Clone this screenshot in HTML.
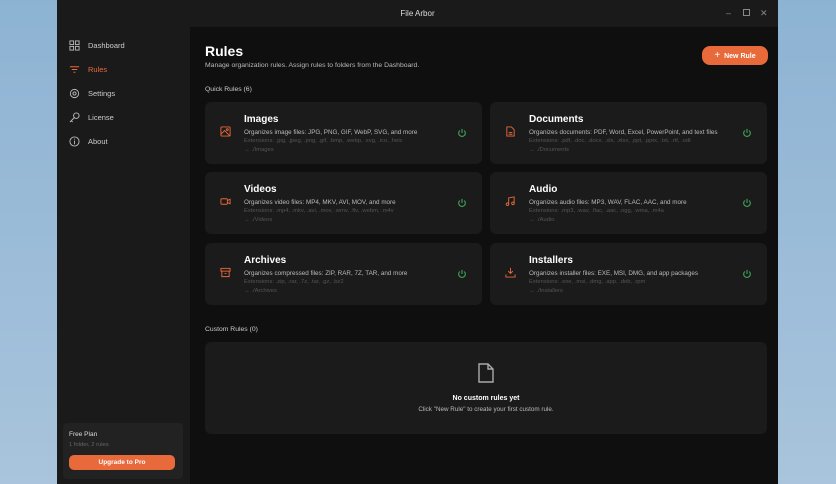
<!DOCTYPE html>
<html><head><style>
*{margin:0;padding:0;box-sizing:border-box}
body{width:836px;height:484px;background:linear-gradient(180deg,#8db3d3,#a9c4dc);font-family:"Liberation Sans",sans-serif;position:relative;overflow:hidden;color:#fff}
.win{position:absolute;left:57px;top:0;width:721px;height:484px;background:#0f0f0f}
.tb{position:absolute;left:0;top:0;width:721px;height:27px;background:#1a1a1a;font-size:8px;color:#ddd;text-align:center;line-height:27px}
.ctl{position:absolute;top:0;font-size:9px;color:#888}
.side{position:absolute;left:0;top:27px;width:133px;height:457px;background:#1a1a1a}
.nav{position:absolute;left:12px;font-size:7.5px;color:#ccc;display:flex;align-items:center}
.nav svg{margin-right:8px}
.plan{position:absolute;left:6px;top:423px;width:120px;height:56px;background:#222;border-radius:4px}
.btn{background:#e8693a;border-radius:5px;color:#fff;font-weight:bold;text-align:center}
.card{position:absolute;width:277px;height:62px;background:#1b1b1b;border-radius:6px}
.card .ic{position:absolute;left:15px;top:24px}
.card h3{position:absolute;left:39px;top:12px;font-size:10px;font-weight:bold}
.card .d{position:absolute;left:39px;top:27px;font-size:6.3px;color:#bbb;white-space:nowrap}
.card .e{position:absolute;left:39px;top:36px;font-size:5.8px;color:#555;white-space:nowrap}
.card .p{position:absolute;left:39px;top:45px;font-size:5.8px;color:#555}
.card .pw{position:absolute;right:15px;top:26px}
</style></head><body>
<div class="win">
<div class="tb">File Arbor
<span class="ctl" style="left:669px">–</span>
<span class="ctl" style="left:686px;top:9px;width:7px;height:7px;border:1px solid #888"></span>
<span class="ctl" style="left:703px">✕</span></div>
<div class="side">
<div class="nav" style="top:13px"><svg width="11" height="11" viewBox="0 0 12 12" fill="none" stroke="#bbb"><rect x="1" y="1" width="4" height="4"/><rect x="7" y="1" width="4" height="4"/><rect x="1" y="7" width="4" height="4"/><rect x="7" y="7" width="4" height="4"/></svg>Dashboard</div>
<div class="nav" style="top:37px;color:#e8693a"><svg width="11" height="11" viewBox="0 0 12 12" stroke="#e8693a"><path d="M1 3h10M3 6h6M5 9h2"/></svg>Rules</div>
<div class="nav" style="top:61px"><svg width="11" height="11" viewBox="0 0 12 12" fill="none" stroke="#bbb"><circle cx="6" cy="6" r="4.5"/><circle cx="6" cy="6" r="1.7"/></svg>Settings</div>
<div class="nav" style="top:85px"><svg width="11" height="11" viewBox="0 0 12 12" fill="none" stroke="#bbb"><circle cx="8" cy="4" r="3"/><path d="M6 6L1 11M2.5 9.5l1.5 1.5"/></svg>License</div>
<div class="nav" style="top:109px"><svg width="11" height="11" viewBox="0 0 12 12" fill="none" stroke="#bbb"><circle cx="6" cy="6" r="5"/><path d="M6 5v4M6 3v1"/></svg>About</div>
<div class="plan" style="top:396px">
<div style="position:absolute;left:6px;top:8px;font-size:6.5px;color:#ddd">Free Plan</div>
<div style="position:absolute;left:6px;top:19px;font-size:5.8px;color:#666">1 folder, 2 rules</div>
<div class="btn" style="position:absolute;left:6px;top:32px;width:106px;height:15px;font-size:6.5px;line-height:15px">Upgrade to Pro</div>
</div>
</div>
<div style="position:absolute;left:148px;top:43px;font-size:14px;font-weight:bold">Rules</div>
<div style="position:absolute;left:148px;top:62px;font-size:6.8px;color:#bbb">Manage organization rules. Assign rules to folders from the Dashboard.</div>
<div class="btn" style="position:absolute;left:645px;top:46px;width:66px;height:19px;font-size:7px;line-height:19px;border-radius:8px"><span style="font-size:10px;font-weight:normal">+</span>&nbsp; New Rule</div>
<div style="position:absolute;left:148px;top:86px;font-size:6.8px;color:#ccc">Quick Rules (6)</div>

<div class="card" style="left:148px;top:102px"><svg class="ic" width="11" height="11" viewBox="0 0 12 12" fill="none" stroke="#e8693a"><rect x="1" y="1" width="10" height="10" rx="1"/><path d="M1 9l4-4 6 6"/><circle cx="8" cy="4" r="1"/></svg><h3>Images</h3><div class="d">Organizes image files: JPG, PNG, GIF, WebP, SVG, and more</div><div class="e">Extensions: .jpg, .jpeg, .png, .gif, .bmp, .webp, .svg, .ico, .heic</div><div class="p">→ ./Images</div><svg class="pw" width="10" height="10" viewBox="0 0 12 12" fill="none" stroke="#3fa45a" stroke-width="1.3"><path d="M6 1v5M3.5 3a4 4 0 1 0 5 0"/></svg></div>
<div class="card" style="left:433px;top:102px"><svg class="ic" width="11" height="11" viewBox="0 0 12 12" fill="none" stroke="#e8693a"><path d="M2 1h5l3 3v7H2z M4 7h4M4 9h4"/></svg><h3>Documents</h3><div class="d">Organizes documents: PDF, Word, Excel, PowerPoint, and text files</div><div class="e">Extensions: .pdf, .doc, .docx, .xls, .xlsx, .ppt, .pptx, .txt, .rtf, .odt</div><div class="p">→ ./Documents</div><svg class="pw" width="10" height="10" viewBox="0 0 12 12" fill="none" stroke="#3fa45a" stroke-width="1.3"><path d="M6 1v5M3.5 3a4 4 0 1 0 5 0"/></svg></div>
<div class="card" style="left:148px;top:172px"><svg class="ic" width="11" height="11" viewBox="0 0 12 12" fill="none" stroke="#e8693a"><rect x="1" y="3" width="7" height="6" rx="1"/><path d="M8 5l3-1.5v5L8 7"/></svg><h3>Videos</h3><div class="d">Organizes video files: MP4, MKV, AVI, MOV, and more</div><div class="e">Extensions: .mp4, .mkv, .avi, .mov, .wmv, .flv, .webm, .m4v</div><div class="p">→ ./Videos</div><svg class="pw" width="10" height="10" viewBox="0 0 12 12" fill="none" stroke="#3fa45a" stroke-width="1.3"><path d="M6 1v5M3.5 3a4 4 0 1 0 5 0"/></svg></div>
<div class="card" style="left:433px;top:172px"><svg class="ic" width="11" height="11" viewBox="0 0 12 12" fill="none" stroke="#e8693a"><path d="M4 9V2l6-1v7"/><circle cx="2.7" cy="9" r="1.4"/><circle cx="8.7" cy="8" r="1.4"/></svg><h3>Audio</h3><div class="d">Organizes audio files: MP3, WAV, FLAC, AAC, and more</div><div class="e">Extensions: .mp3, .wav, .flac, .aac, .ogg, .wma, .m4a</div><div class="p">→ ./Audio</div><svg class="pw" width="10" height="10" viewBox="0 0 12 12" fill="none" stroke="#3fa45a" stroke-width="1.3"><path d="M6 1v5M3.5 3a4 4 0 1 0 5 0"/></svg></div>
<div class="card" style="left:148px;top:243px"><svg class="ic" width="11" height="11" viewBox="0 0 12 12" fill="none" stroke="#e8693a"><rect x="1" y="1.5" width="10" height="3"/><path d="M2 4.5v6h8v-6M5 7h2"/></svg><h3>Archives</h3><div class="d">Organizes compressed files: ZIP, RAR, 7Z, TAR, and more</div><div class="e">Extensions: .zip, .rar, .7z, .tar, .gz, .bz2</div><div class="p">→ ./Archives</div><svg class="pw" width="10" height="10" viewBox="0 0 12 12" fill="none" stroke="#3fa45a" stroke-width="1.3"><path d="M6 1v5M3.5 3a4 4 0 1 0 5 0"/></svg></div>
<div class="card" style="left:433px;top:243px"><svg class="ic" width="11" height="11" viewBox="0 0 12 12" fill="none" stroke="#e8693a"><path d="M6 1v6M3.5 4.5L6 7l2.5-2.5M1 8v3h10V8"/></svg><h3>Installers</h3><div class="d">Organizes installer files: EXE, MSI, DMG, and app packages</div><div class="e">Extensions: .exe, .msi, .dmg, .app, .deb, .rpm</div><div class="p">→ ./Installers</div><svg class="pw" width="10" height="10" viewBox="0 0 12 12" fill="none" stroke="#3fa45a" stroke-width="1.3"><path d="M6 1v5M3.5 3a4 4 0 1 0 5 0"/></svg></div>

<div style="position:absolute;left:148px;top:326px;font-size:6.8px;color:#ccc">Custom Rules (0)</div>
<div style="position:absolute;left:148px;top:342px;width:562px;height:92px;background:#1b1b1b;border-radius:6px;text-align:center">
<svg style="position:absolute;left:271px;top:20px" width="20" height="22" viewBox="0 0 20 22" fill="none" stroke="#aaa" stroke-width="1.4"><path d="M3 2h9l5 5v13H3z M12 2v5h5"/></svg>
<div style="position:absolute;left:0;width:562px;top:53px;font-size:7px;font-weight:bold">No custom rules yet</div>
<div style="position:absolute;left:0;width:562px;top:64px;font-size:6.3px;color:#bbb">Click "New Rule" to create your first custom rule.</div>
</div>
</div>
</body></html>
